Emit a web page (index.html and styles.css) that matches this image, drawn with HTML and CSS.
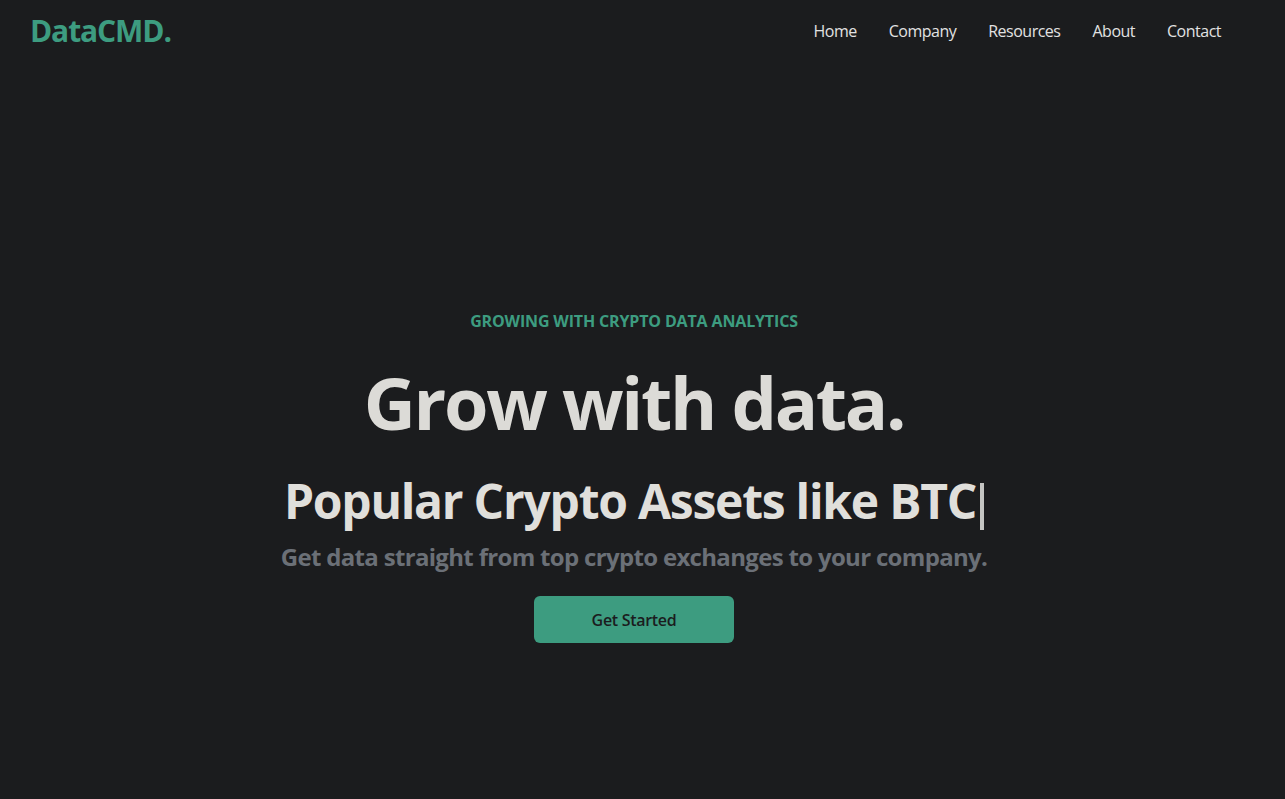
FILE: index.html
```html
<!DOCTYPE html>
<html lang="en">
<head>
<meta charset="utf-8">
<title>DataCMD.</title>
<link rel="stylesheet" href="styles.css">
</head>
<body>
<header class="nav">
  <h1 class="logo">DataCMD.</h1>
  <ul class="menu">
    <li>Home</li>
    <li>Company</li>
    <li>Resources</li>
    <li>About</li>
    <li>Contact</li>
  </ul>
</header>
<main class="hero">
  <p class="eyebrow">GROWING WITH CRYPTO DATA ANALYTICS</p>
  <h2 class="title">Grow with data.</h2>
  <div class="typed">Popular Crypto Assets like BTC<span class="cursor"></span></div>
  <p class="lead">Get data straight from top crypto exchanges to your company.</p>
  <button class="cta">Get Started</button>
</main>
</body>
</html>
```
FILE: styles.css
```css
* { box-sizing: border-box; }
html, body {
  margin: 0;
  padding: 0;
  background: #1b1c1e;
  color: #dcdbd7;
  font-family: "Open Sans", "Noto Sans", sans-serif;
}
body {
  padding-right: 17px;
}
.nav {
  height: 62px;
  display: flex;
  align-items: center;
  justify-content: space-between;
  padding: 0 31px 0 30px;
}
.logo {
  margin: 0;
  font-size: 30px;
  line-height: 36px;
  font-weight: 700;
  color: #3d9c80;
  letter-spacing: -1.1px;
}
.menu {
  display: flex;
  list-style: none;
  margin: 0;
  padding: 0;
}
.menu li {
  padding: 0 16px;
  font-size: 16px;
  line-height: 24px;
  color: #e2e2e2;
  letter-spacing: -0.5px;
}
.hero {
  display: flex;
  flex-direction: column;
  align-items: center;
  text-align: center;
  padding-top: 247px;
}
.eyebrow {
  margin: 0;
  font-size: 16px;
  line-height: 24px;
  font-weight: 700;
  color: #3d9c80;
  letter-spacing: -0.15px;
}
.title {
  margin: 33px 0 0;
  font-size: 72px;
  line-height: 72px;
  font-weight: 700;
  color: #dcdbd7;
  letter-spacing: -2.3px;
}
.typed {
  margin-top: 39px;
  height: 48px;
  font-size: 48px;
  line-height: 48px;
  font-weight: 700;
  color: #e0dfdb;
  letter-spacing: -1.25px;
}
.cursor {
  display: inline-block;
  width: 4px;
  height: 47px;
  margin-left: 4px;
  background: #c4c4c2;
  vertical-align: -11px;
}
.lead {
  margin: 16px 0 0;
  font-size: 24px;
  line-height: 32px;
  font-weight: 700;
  color: #6b7077;
  letter-spacing: -0.68px;
}
.cta {
  margin-top: 23px;
  width: 200px;
  height: 47px;
  border: 0;
  border-radius: 6px;
  background: #3d9c80;
  color: #1b1c1e;
  font-family: inherit;
  font-size: 16px;
  font-weight: 600;
  letter-spacing: -0.3px;
}
```
